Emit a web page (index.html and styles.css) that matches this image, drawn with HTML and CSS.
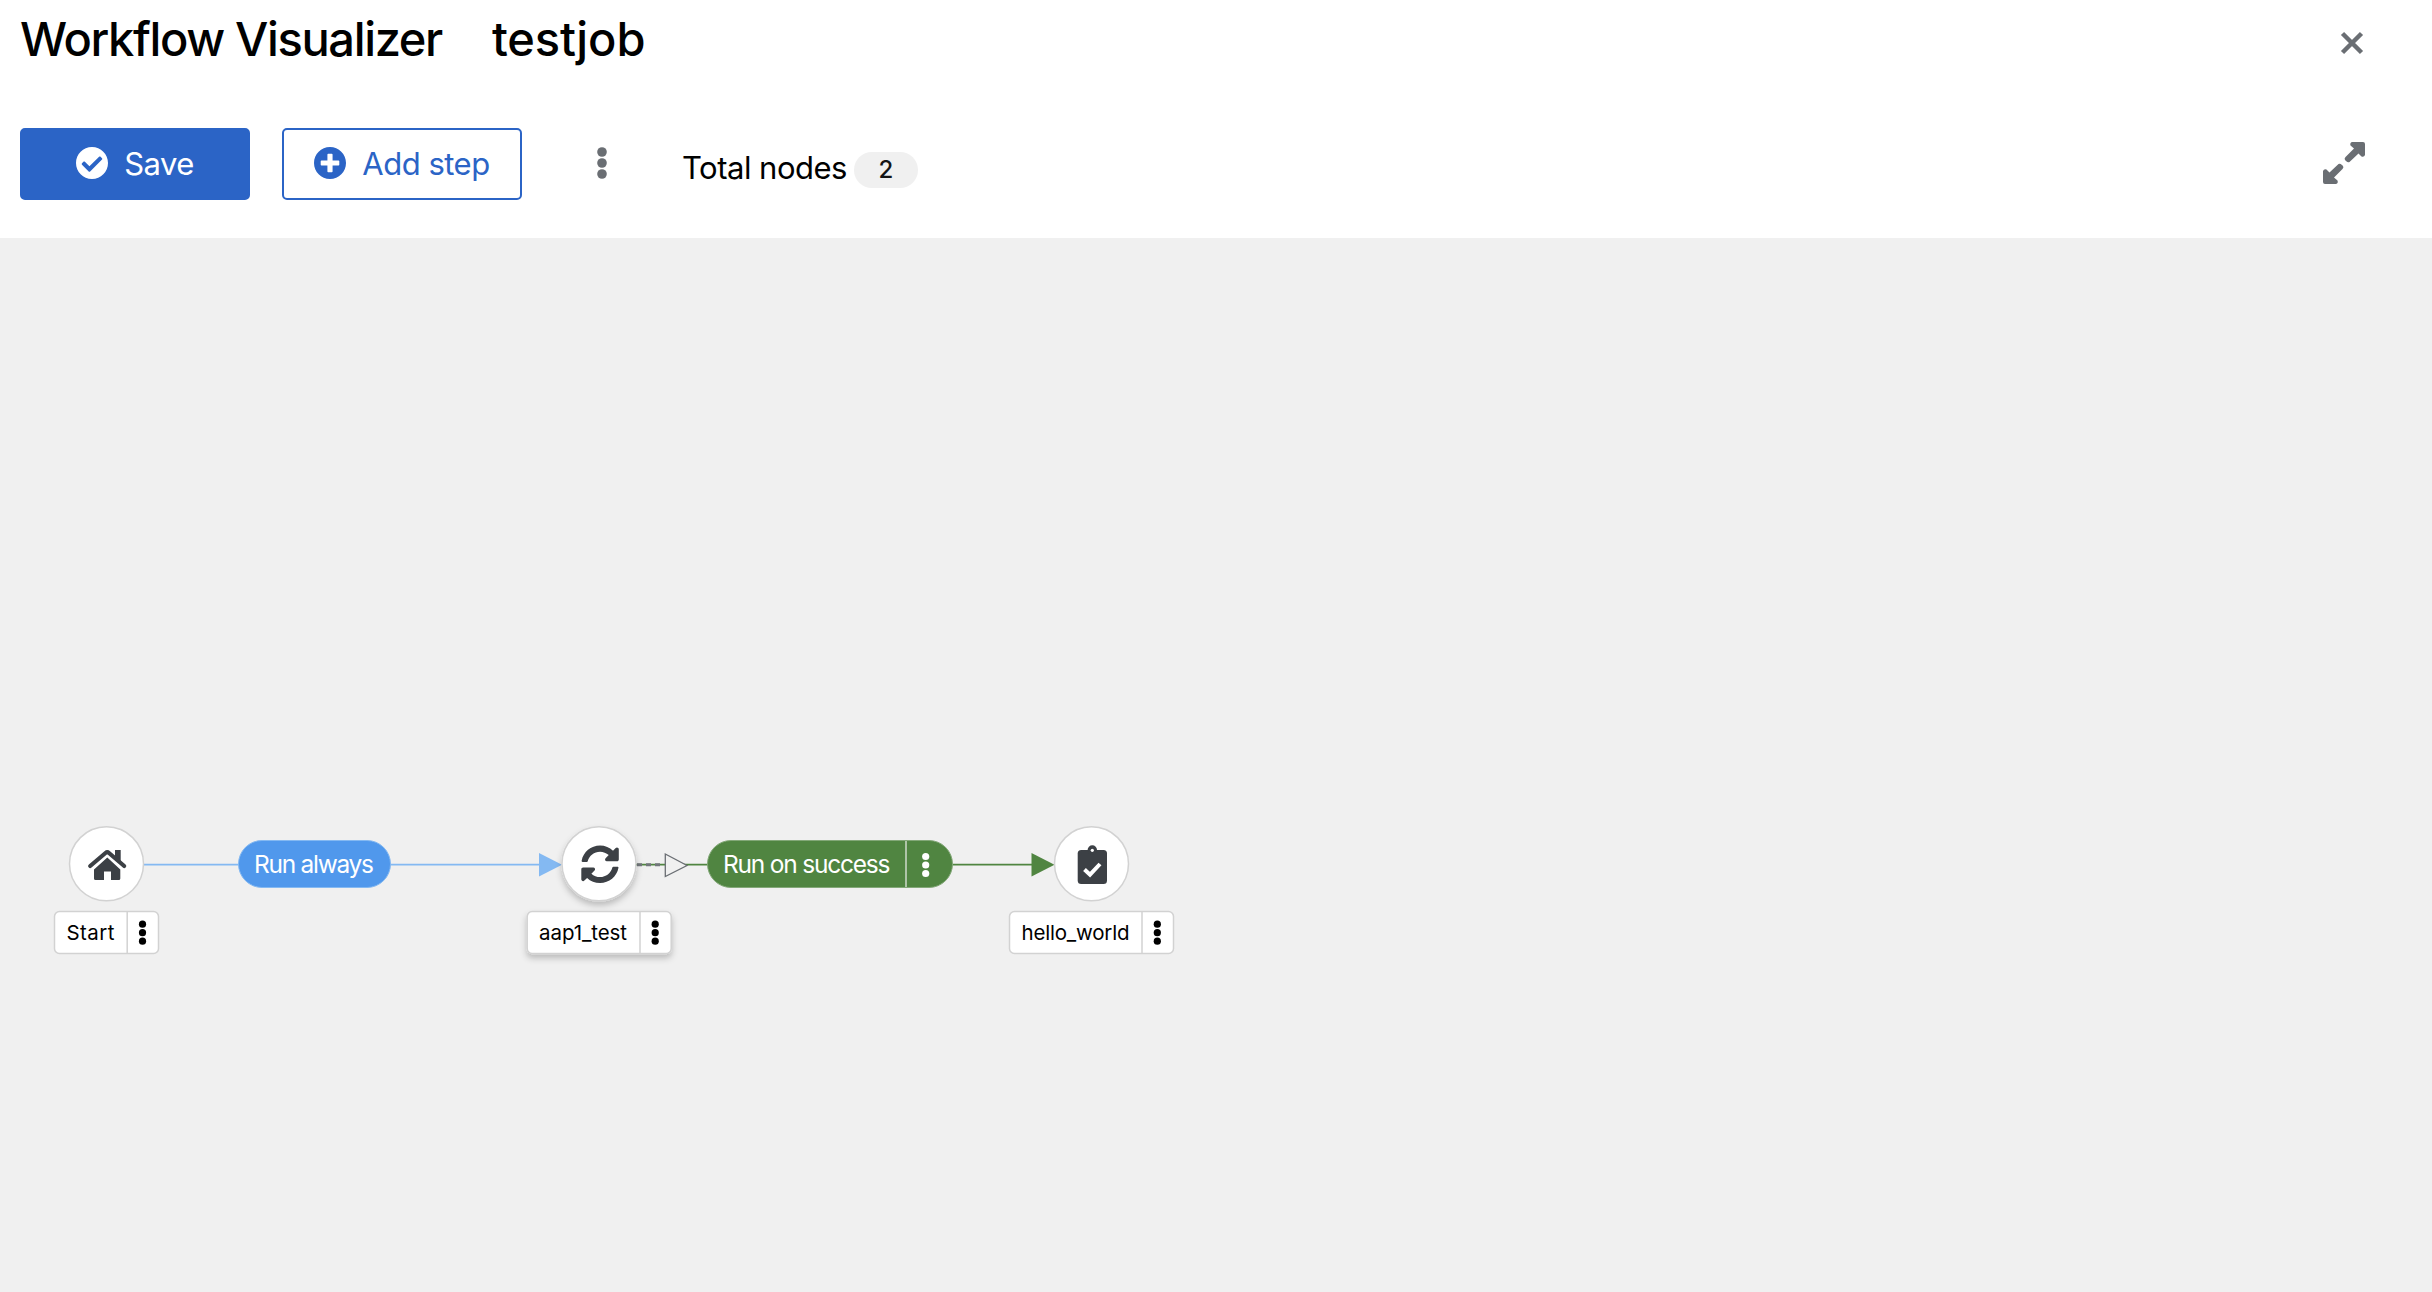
FILE: index.html
```html
<!DOCTYPE html>
<html lang="en">
<head>
    <meta charset="UTF-8">
    <meta name="viewport" content="width=device-width, initial-scale=1.0">
    <title>Workflow Visualizer</title>
    <link rel="stylesheet" href="styles.css">
</head>
<body>

    <header class="header">
        <div class="title-row">
            <h1 class="title">Workflow Visualizer</h1>
            <h1 class="title job-name">testjob</h1>
            <button class="icon-button close" aria-label="Close">
                <svg width="24" height="24" viewBox="0 0 24 24"><path d="M2.500 2.500L21.500 21.500M21.500 2.500L2.500 21.500" stroke="currentColor" stroke-width="4.500"/></svg>
            </button>
        </div>

        <div class="toolbar">
            <button class="button primary">
                <svg class="button-icon" viewBox="8 8 496 496"><path fill="currentColor" d="M504 256c0 136.967-111.033 248-248 248S8 392.967 8 256 119.033 8 256 8s248 111.033 248 248zM227.314 387.314l184-184c6.248-6.248 6.248-16.379 0-22.627l-22.627-22.627c-6.248-6.249-16.379-6.249-22.628 0L216 308.118l-70.059-70.059c-6.248-6.248-16.379-6.248-22.628 0l-22.627 22.627c-6.248 6.248-6.248 16.379 0 22.627l104 104c6.249 6.249 16.379 6.249 22.628.001z"/></svg>
                <span class="save-text">Save</span>
            </button>
            <button class="button secondary">
                <svg class="button-icon" viewBox="8 8 496 496"><path fill="currentColor" d="M256 8C119 8 8 119 8 256s111 248 248 248 248-111 248-248S393 8 256 8zm144 276c0 6.6-5.4 12-12 12h-92v92c0 6.6-5.4 12-12 12h-56c-6.6 0-12-5.4-12-12v-92h-92c-6.6 0-12-5.4-12-12v-56c0-6.6 5.4-12 12-12h92v-92c0-6.6 5.4-12 12-12h56c6.6 0 12 5.4 12 12v92h92c6.6 0 12 5.4 12 12v56z"/></svg>
                <span class="add-text">Add step</span>
            </button>
            <button class="icon-button kebab" aria-label="More actions">
                <svg width="10" height="32" viewBox="0 0 10 32" fill="currentColor"><circle cx="5" cy="5" r="4.8"/><circle cx="5" cy="16" r="4.8"/><circle cx="5" cy="27" r="4.8"/></svg>
            </button>
            <div class="total">
                <span class="total-label">Total nodes</span>
                <span class="badge">2</span>
            </div>
            <button class="icon-button expand" aria-label="Expand">
                <svg width="42" height="42" viewBox="0 0 42 42" fill="currentColor">
                    <path d="M29 0H40Q42 0 42 2V13Q41 15.500 38.500 14.500L35.500 11.500L26.500 20Q25 21 23 19L22 18Q21 16.500 22.500 15L31 6.500L27.500 3.500Q26.500 1 29 0Z"/>
                    <path d="M13 42H2Q0 42 0 40V29Q1 26.500 3.500 27.500L6.500 30.500L15.500 22Q17 21 19 23L20 24Q21 25.500 19.500 27L11 35.500L14.500 38.500Q15.500 41 13 42Z"/>
                </svg>
            </button>
        </div>
    </header>

    <main class="canvas">
        <svg class="graph" width="2432" height="1054" viewBox="0 238 2432 1054">
            <defs>
                <filter id="shadow" x="-20%" y="-20%" width="140%" height="160%">
                    <feDropShadow dx="0" dy="4" stdDeviation="3" flood-color="#030303" flood-opacity="0.22"/>
                </filter>
                <g id="dots">
                    <circle cy="-8.500" r="3.600"/>
                    <circle r="3.600"/>
                    <circle cy="8.500" r="3.600"/>
                </g>
            </defs>

            <!-- Start to aap1_test -->
            <path class="edge always" d="M106 864.700H540"/>
            <path class="arrow always" d="M539 853V876.500L562 864.700Z"/>
            <rect class="pill always" x="238.500" y="840.500" width="152" height="47" rx="23.500"/>
            <text class="pill-text" x="254" y="872.500" textLength="120">Run always</text>

            <!-- aap1_test to hello_world -->
            <path class="edge success" d="M600 864.700H1032"/>
            <path class="arrow success" d="M1031.500 853V876.500L1054.500 864.700Z"/>
            <path class="handle-line" d="M637 864.700H664"/>
            <path class="handle" d="M665.300 854V876.500L687 865.500Z"/>
            <rect class="pill success" x="707.500" y="840.500" width="245" height="47" rx="23.500"/>
            <path class="pill-divider" d="M906 841V887"/>
            <text class="pill-text" x="723" y="872.500" textLength="167.500">Run on success</text>
            <use href="#dots" x="925.700" y="865" fill="#fff"/>

            <g class="node">
                <circle class="node-circle" cx="106.500" cy="863.800" r="37"/>
                <path class="node-icon" d="M94 869.500L107.300 857.500L120.300 869.500V878.500Q120.300 880 118.800 880H111V871.500H104V880H95.500Q94 880 94 878.500Z"/>
                <path class="node-icon" d="M115 850H120.700V864L115 859Z"/>
                <path class="roof" d="M90.200 866L105.500 853Q107.300 851.500 109 853L124.200 866"/>
                <rect class="label" x="54.500" y="911.500" width="104" height="42" rx="5"/>
                <path class="label-divider" d="M127.200 912V953"/>
                <text class="label-text" x="66.500" y="939.500" textLength="48">Start</text>
                <use href="#dots" x="142.500" y="932.700"/>
            </g>

            <g class="node">
                <circle class="node-circle" cx="599" cy="863.800" r="37" filter="url(#shadow)"/>
                <path class="node-icon" transform="translate(580.700 845) scale(.0756)" d="M370.720 133.280C339.458 104.008 298.888 87.962 255.848 88c-77.458.068-144.328 53.178-162.791 126.850-1.344 5.363-6.122 9.150-11.651 9.150H24.103c-7.498 0-13.194-6.807-11.807-14.176C33.933 94.924 134.813 8 256 8c66.448 0 126.791 26.136 171.315 68.685L463.030 40.970C478.149 25.851 504 36.559 504 57.941V192c0 13.255-10.745 24-24 24H345.941c-21.382 0-32.090-25.851-16.971-40.971l41.750-41.749zM32 296h134.059c21.382 0 32.090 25.851 16.971 40.971l-41.750 41.750c31.262 29.273 71.835 45.319 114.876 45.280 77.418-.070 144.315-53.144 162.787-126.849 1.344-5.363 6.122-9.150 11.651-9.150h57.304c7.498 0 13.194 6.807 11.807 14.176C478.067 417.076 377.187 504 256 504c-66.448 0-126.791-26.136-171.315-68.685L48.970 471.030C33.851 486.149 8 475.441 8 454.059V320c0-13.255 10.745-24 24-24z"/>
                <rect class="label" x="527.200" y="911.500" width="144" height="42" rx="5" filter="url(#shadow)"/>
                <path class="label-divider" d="M640 912V953"/>
                <text class="label-text" x="539" y="939.500" textLength="88">aap1_test</text>
                <use href="#dots" x="655.200" y="932.700"/>
            </g>

            <g class="node">
                <circle class="node-circle" cx="1091.500" cy="863.800" r="37"/>
                <rect class="node-icon" x="1077.700" y="850" width="29.300" height="34" rx="3.500"/>
                <circle class="node-icon" cx="1092.300" cy="850" r="4.700"/>
                <circle class="icon-hole" cx="1092.300" cy="850.300" r="1.600"/>
                <path class="check" d="M1084.500 869.500L1090 874.700L1100 864"/>
                <rect class="label" x="1009.500" y="911.500" width="164" height="42" rx="5"/>
                <path class="label-divider" d="M1142 912V953"/>
                <text class="label-text" x="1021.500" y="939.500" textLength="108">hello_world</text>
                <use href="#dots" x="1157.300" y="932.700"/>
            </g>
        </svg>
    </main>

</body>
</html>
```

FILE: styles.css
```css
* {
    box-sizing: border-box;
}
body {
    margin: 0;
    height: 100vh;
    display: flex;
    flex-direction: column;
    overflow: hidden;
    font-family: Inter, "Open Sans", sans-serif;
    color: #000;
    background-color: #fff;
}
.header {
    height: 238px;
    padding: 0 67px 0 20px;
}
.title-row {
    display: flex;
    align-items: center;
    height: 80px;
}
.title {
    margin: 0;
    padding-bottom: 4px;
    font-size: 47px;
    font-weight: 500;
    line-height: 1;
    letter-spacing: -1.35px;
    white-space: nowrap;
}
.job-name {
    margin-left: 50px;
    letter-spacing: -0.1px;
}
.icon-button {
    display: flex;
    padding: 0;
    border: 0;
    background: none;
    color: #6a6e73;
    cursor: pointer;
}
.close {
    margin-left: auto;
    margin-right: 1px;
    padding-top: 6px;
}
.toolbar {
    display: flex;
    align-items: center;
    height: 72px;
    margin-top: 48px;
}
.button {
    display: flex;
    align-items: center;
    justify-content: center;
    gap: 16px;
    height: 72px;
    padding: 0 0 2px;
    border: 2px solid #2b64c6;
    border-radius: 5px;
    font-family: inherit;
    font-size: 31px;
    white-space: nowrap;
    cursor: pointer;
}
.primary {
    width: 230px;
    background-color: #2b64c6;
    color: #fff;
}
.secondary {
    width: 240px;
    margin-left: 32px;
    background-color: #fff;
    color: #2b64c6;
}
.button-icon {
    width: 32px;
    height: 32px;
}
.kebab {
    margin-left: 75px;
    padding-bottom: 2px;
}
.save-text {
    letter-spacing: -0.5px;
}
.add-text {
    letter-spacing: -0.5px;
}
.total {
    display: flex;
    align-items: center;
    margin-left: 75px;
    padding-top: 11px;
}
.total-label {
    width: 172px;
    padding-bottom: 4px;
    font-size: 31px;
    letter-spacing: -0.5px;
    line-height: 36px;
    white-space: nowrap;
}
.badge {
    width: 64px;
    height: 36px;
    border-radius: 18px;
    background-color: #f0f0f0;
    color: #151515;
    font-size: 24px;
    font-weight: 500;
    line-height: 36px;
    text-align: center;
}
.expand {
    margin-left: auto;
    padding-bottom: 2px;
}
.canvas {
    flex: 1;
    background-color: #f0f0f0;
}
.graph {
    display: block;
}
.edge {
    fill: none;
    stroke-width: 1.8;
}
.edge.always {
    stroke: #84b9f2;
}
.edge.success {
    stroke: #508541;
}
.arrow.always {
    fill: #84b9f2;
}
.arrow.success,
.pill.success {
    fill: #508541;
}
.pill.always {
    fill: #5098ec;
    stroke: #84b9f2;
}
.pill.success {
    stroke: #83a878;
}
.pill-divider {
    stroke: #b9cbb4;
    stroke-width: 1.8;
}
.pill-text {
    fill: #fff;
    font-size: 24.5px;
}
.handle-line {
    fill: none;
    stroke: #72767b;
    stroke-width: 3;
    stroke-dasharray: 5 4;
}
.handle {
    fill: #f0f0f0;
    stroke: #6a6e73;
    stroke-width: 1.3;
}
.node-circle,
.label {
    fill: #fff;
    stroke: #d2d2d2;
    stroke-width: 1.5;
}
.label-divider {
    stroke: #d2d2d2;
    stroke-width: 1.5;
}
.label-text {
    font-size: 20.5px;
}
.node-icon {
    fill: #3c4045;
}
.icon-hole {
    fill: #fff;
}
.roof {
    fill: none;
    stroke: #3c4045;
    stroke-width: 4.2;
    stroke-linecap: round;
}
.check {
    fill: none;
    stroke: #fff;
    stroke-width: 4;
}
```
